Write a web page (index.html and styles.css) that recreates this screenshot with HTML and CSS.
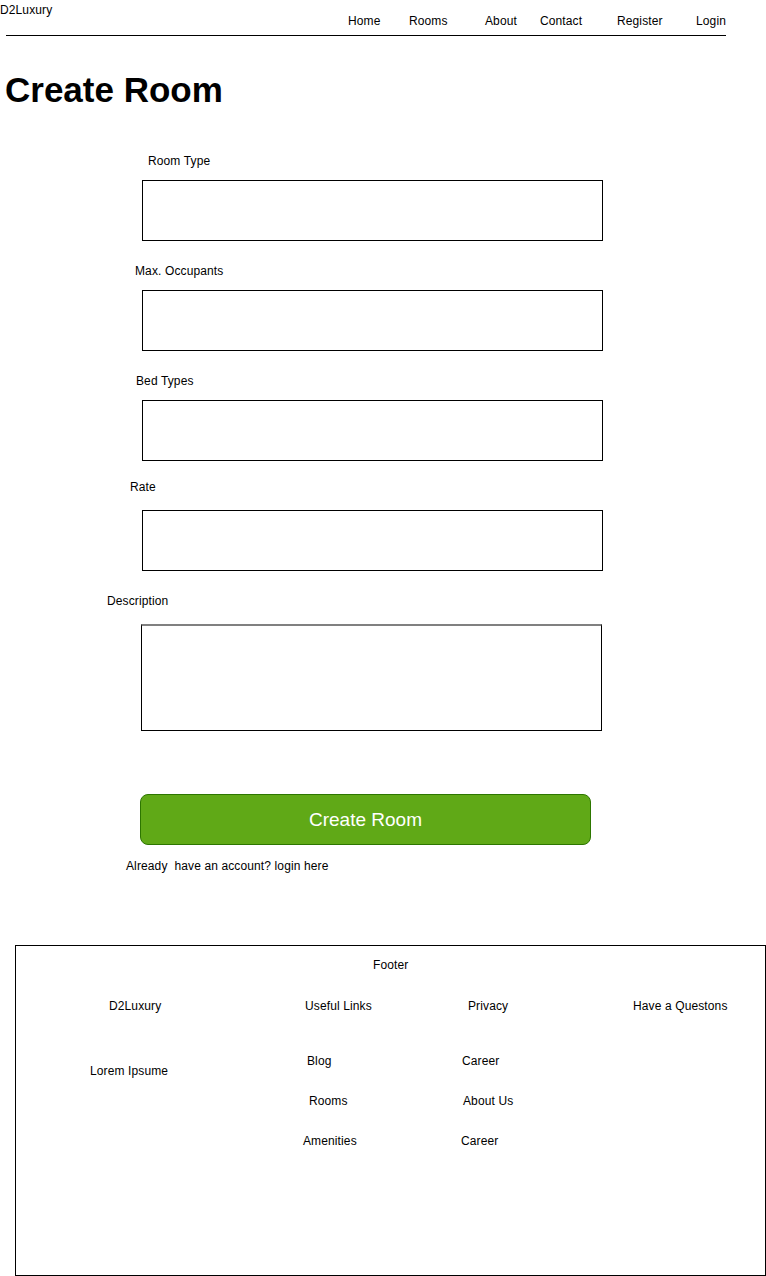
FILE: index.html
```html
<!DOCTYPE html>
<html lang="en">
<head>
<meta charset="utf-8">
<title>Create Room - D2Luxury</title>
<link rel="stylesheet" href="styles.css">
</head>
<body>
<header class="topbar">
  <div class="brand">D2Luxury</div>
  <nav class="nav">
    <a class="nav-item">Home</a>
    <a class="nav-item">Rooms</a>
    <a class="nav-item">About</a>
    <a class="nav-item">Contact</a>
    <a class="nav-item">Register</a>
    <a class="nav-item">Login</a>
  </nav>
</header>
<div class="rule"></div>

<h1 class="title">Create Room</h1>

<form class="form">
  <label class="label label--type">Room Type</label>
  <input class="field" type="text">

  <label class="label label--occ">Max. Occupants</label>
  <input class="field" type="text">

  <label class="label label--bed">Bed Types</label>
  <input class="field" type="text">

  <label class="label label--rate">Rate</label>
  <input class="field field--rate" type="text">

  <label class="label label--desc">Description</label>
  <textarea class="area"></textarea>

  <button class="btn" type="button">Create Room</button>
  <p class="note">Already&nbsp; have an account? login here</p>
</form>

<footer class="footer">
  <div class="footer-title">Footer</div>
  <div class="footer-cols">
    <div class="fcol">
      <div class="fhead off-19">D2Luxury</div>
      <div class="fitem lorem">Lorem Ipsume</div>
    </div>
    <div class="fcol">
      <div class="fhead off-2">Useful Links</div>
      <div class="fitem off-4">Blog</div>
      <div class="fitem off-6">Rooms</div>
      <div class="fitem">Amenities</div>
    </div>
    <div class="fcol">
      <div class="fhead off-7">Privacy</div>
      <div class="fitem off-1">Career</div>
      <div class="fitem off-2">About Us</div>
      <div class="fitem">Career</div>
    </div>
    <div class="fcol">
      <div class="fhead">Have a Questons</div>
    </div>
  </div>
</footer>
</body>
</html>
```

FILE: styles.css
```css
* { box-sizing: border-box; }

html, body {
  margin: 0;
  padding: 0;
  background: #ffffff;
  color: #000000;
  font-family: "Liberation Sans", Arial, Helvetica, sans-serif;
  font-size: 12px;
  line-height: 14px;
  letter-spacing: 0.12px;
}

/* ---------- top bar ---------- */
.topbar {
  display: grid;
  grid-template-columns: 348px auto;
  height: 35px;
  align-items: start;
}

.brand {
  margin-top: 3px;
}

.nav {
  display: grid;
  grid-template-columns: 61px 76px 55px 77px 79px auto;
  margin-top: 14px;
}

.nav-item {
  color: #000;
  text-decoration: none;
  white-space: nowrap;
}

.rule {
  margin-left: 6px;
  width: 720px;
  border-top: 1px solid #000;
}

/* ---------- title ---------- */
.title {
  margin: 35px 0 0 0;
  padding-left: 5px;
  font-size: 35px;
  line-height: 38px;
  font-weight: bold;
  letter-spacing: 0;
}

/* ---------- form ---------- */
.form {
  display: flex;
  flex-direction: column;
  align-items: flex-start;
  margin: 0;
}

.label {
  display: block;
  margin-top: 23px;
  margin-bottom: 12px;
  white-space: nowrap;
}

.label--type { margin-top: 45px; margin-left: 148px; }
.label--occ  { margin-left: 135px; }
.label--bed  { margin-left: 136px; }
.label--rate { margin-top: 19px; margin-bottom: 16px; margin-left: 130px; }
.label--desc { margin-bottom: 16px; margin-left: 107px; }

.field {
  display: block;
  margin: 0 0 0 142px;
  width: 461px;
  height: 61px;
  padding: 0;
  border: 1px solid #000;
  background: #fff;
  font: inherit;
}

.area {
  display: block;
  margin: 0 0 0 141px;
  width: 461px;
  height: 107px;
  padding: 0;
  border: 1px solid #000;
  border-top: 2px solid #808080;
  background: #fff;
  resize: none;
  font: inherit;
}

.btn {
  display: flex;
  align-items: center;
  justify-content: center;
  margin: 63px 0 0 140px;
  width: 451px;
  height: 51px;
  padding: 1px 0 0 0;
  border: 1px solid #2d7600;
  border-radius: 8px;
  background: #60a917;
  color: #ffffff;
  font-family: "Liberation Sans", Arial, Helvetica, sans-serif;
  font-size: 19px;
  line-height: 22px;
  letter-spacing: 0;
  cursor: pointer;
}

.note {
  margin: 14px 0 0 126px;
  white-space: nowrap;
}

/* ---------- footer ---------- */
.footer {
  margin: 72px 0 0 15px;
  width: 751px;
  height: 331px;
  border: 1px solid #000;
}

.footer-title {
  padding: 12px 0 0 357px;
}

.footer-cols {
  display: grid;
  grid-template-columns: 213px 158px 172px auto;
  padding-left: 74px;
  margin-top: 27px;
}

.fcol {
  display: flex;
  flex-direction: column;
  align-items: flex-start;
  gap: 26px;
}

.fhead {
  margin-bottom: 15px;
  white-space: nowrap;
}

.fitem {
  white-space: nowrap;
}

.lorem { margin-top: 10px; }

.off-1  { margin-left: 1px; }
.off-2  { margin-left: 2px; }
.off-4  { margin-left: 4px; }
.off-6  { margin-left: 6px; }
.off-7  { margin-left: 7px; }
.off-19 { margin-left: 19px; }
```
